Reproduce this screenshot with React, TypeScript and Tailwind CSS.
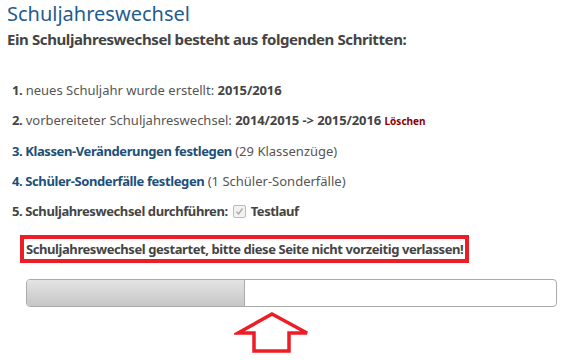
import React from "react";

export default function App() {
  return (
    <div className="w-[561px] h-[360px] bg-white overflow-hidden font-['Noto_Sans',sans-serif]">
      <h1 className="pl-[7px] text-[20px] leading-[27px] text-[#1f5c8f] font-normal">Schuljahreswechsel</h1>
      <p className="pl-[7px] mt-[3px] text-[15px] leading-[18px] font-bold tracking-[-0.4px] text-[#444]">
        Ein Schuljahreswechsel besteht aus folgenden Schritten:
      </p>
      <ol className="pl-[12px] mt-[33px] flex flex-col gap-[12px] text-[13px] leading-[18px] text-[#555]">
        <li>
          <b className="text-[#444] tracking-[-0.4px]">1.</b> neues Schuljahr wurde erstellt:{" "}
          <b className="text-[#444] tracking-[-0.1px]">2015/2016</b>
        </li>
        <li>
          <b className="text-[#444] tracking-[-0.4px]">2.</b> vorbereiteter Schuljahreswechsel:{" "}
          <b className="text-[#444] tracking-[-0.1px]">2014/2015 -&gt; 2015/2016</b>{" "}
          <b className="text-[10px] text-[#8b0000]">Löschen</b>
        </li>
        <li>
          <b className="text-[#1d4f78] tracking-[-0.4px]">3. Klassen-Veränderungen festlegen</b> (29 Klassenzüge)
        </li>
        <li>
          <b className="text-[#1d4f78] tracking-[-0.4px]">4. Schüler-Sonderfälle festlegen</b> (1 Schüler-Sonderfälle)
        </li>
        <li className="flex items-center">
          <b className="text-[#444] tracking-[-0.4px]">5. Schuljahreswechsel durchführen:</b>
          <span className="ml-[5px] mr-[5px] w-[13px] h-[13px] border border-[#bbb] bg-[#f2f2f2] rounded-[2px] flex items-center justify-center">
            <svg width="9" height="9" viewBox="0 0 9 9">
              <path d="M1.5 4.8 L3.6 7 L7.5 1.5" fill="none" stroke="#aaa" strokeWidth="1.4" />
            </svg>
          </span>
          <b className="text-[#444] tracking-[-0.5px]">Testlauf</b>
        </li>
      </ol>
      <div className="pl-[20px] mt-[15px]">
        <div className="inline-block border-4 border-[#ee1c25] px-[2px] py-[1px] text-[13px] leading-[18px] font-bold tracking-[-0.42px] text-[#444]">
          Schuljahreswechsel gestartet, bitte diese Seite nicht vorzeitig verlassen!
        </div>
      </div>
      <div className="ml-[26px] mt-[16px] w-[531px] h-[28px] border border-[#aaa] rounded-[4px] overflow-hidden flex bg-white">
        <div className="w-[218px] h-full border-r border-[#aaa] bg-gradient-to-b from-[#e4e4e4] to-[#c6c6c6]" />
      </div>
      <svg className="block ml-[234px] mt-[4px]" width="78" height="46" viewBox="234 312 78 46">
        <polygon
          points="272,315 307,334 289,334 289,352 254,352 254,334 238,334"
          fill="none"
          stroke="#ee1c25"
          strokeWidth="3.5"
          strokeLinejoin="miter"
        />
      </svg>
    </div>
  );
}
